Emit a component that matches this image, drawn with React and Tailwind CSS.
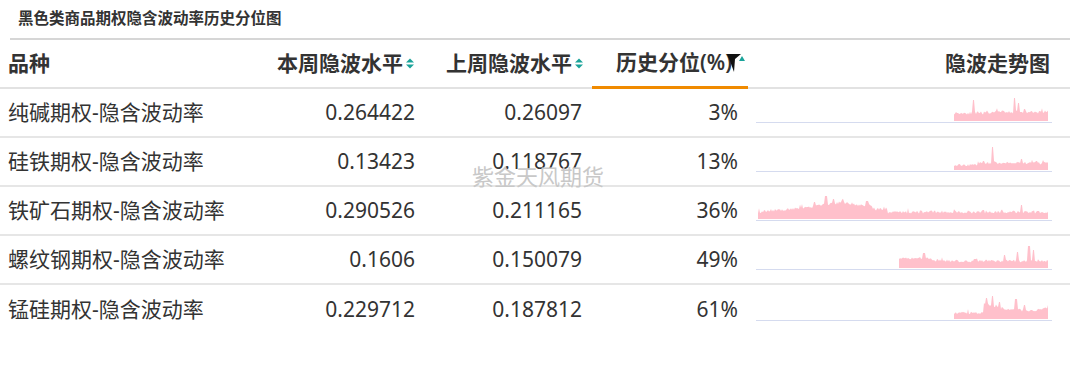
import React from "react";

const FONT = { fontFamily: '"Noto Sans", "Noto Sans CJK SC", sans-serif' };

function rng(seed) {
  let s = seed;
  return () => {
    s = (s * 16807) % 2147483647;
    return (s - 1) / 2147483646;
  };
}

// sparkline configs: start = fraction where data begins, level(t) = base height in px
const SERIES = [
  {
    seed: 11,
    start: 0.68,
    noise: 3,
    level: (t) => 8 + (t > 0.8 ? 1 : 0),
    spikes: [[0.745, 21], [0.885, 23], [0.9, 18], [0.92, 12]],
  },
  {
    seed: 23,
    start: 0.68,
    noise: 2.5,
    level: (t) => (t > 0.76 ? 7 : 5),
    spikes: [[0.81, 23], [0.78, 9], [0.91, 11], [0.96, 9]],
  },
  {
    seed: 37,
    start: 0.01,
    noise: 3,
    level: (t) => {
      if (t < 0.2) return 7 + t * 25;
      if (t < 0.4) return 13 + (t < 0.3 ? (t - 0.2) * 40 : (0.4 - t) * 30);
      if (t < 0.45) return 10;
      return 7;
    },
    spikes: [[0.24, 23], [0.265, 20], [0.43, 9], [0.2, 17], [0.38, 18], [0.91, 14], [0.78, 9]],
  },
  {
    seed: 51,
    start: 0.49,
    noise: 2.5,
    level: (t) => {
      if (t < 0.6) return 10;
      if (t < 0.75) return 8 - (t - 0.6) * 10;
      return 7;
    },
    spikes: [[0.575, 15], [0.75, 9], [0.85, 13], [0.895, 16], [0.935, 22], [0.95, 18]],
  },
  {
    seed: 67,
    start: 0.68,
    noise: 2.5,
    level: (t) => {
      if (t < 0.78) return 6;
      if (t < 0.85) return 16 - (t - 0.78) * 80;
      if (t < 0.96) return 10 - (t - 0.85) * 20;
      return 9 + (t - 0.96) * 60;
    },
    spikes: [[0.79, 21], [0.81, 23], [0.835, 17], [0.89, 20], [0.92, 14]],
  },
];

function buildPath(cfg, w, base) {
  const r = rng(cfg.seed);
  const n = w;
  const startI = Math.floor(cfg.start * n);
  const pts = [];
  for (let i = startI; i <= n; i++) {
    const t = i / n;
    let h = cfg.level(t) + (r() - 0.5) * cfg.noise;
    if (r() > 0.93) h += r() * 3;
    for (const [st, sh] of cfg.spikes) {
      if (Math.abs(t - st) < 0.004) h = Math.max(h, sh);
    }
    pts.push([i, Math.max(2, h)]);
  }
  let d = `M${startI},${base}`;
  for (const [x, h] of pts) d += ` L${x},${(base - h).toFixed(1)}`;
  d += ` L${n},${base} Z`;
  return d;
}

function Sparkline({ cfg }) {
  const w = 292;
  const base = 29;
  return (
    <svg width="296" height="31" viewBox="0 0 296 31" className="block">
      <path d={buildPath(cfg, w, base)} fill="#ffc0cb" />
      <line x1="0" y1="30.5" x2="296" y2="30.5" stroke="#d5dbef" strokeWidth="1" />
    </svg>
  );
}

function SortIcon() {
  return (
    <svg width="10" height="13" viewBox="0 0 10 13" className="ml-[2px] shrink-0">
      <polygon points="5,1.5 9,5.5 1,5.5" fill="#1aa39a" />
      <polygon points="1,7.5 9,7.5 5,11.5" fill="#1aa39a" />
    </svg>
  );
}

function ActiveSortIcon() {
  return (
    <svg width="20" height="20" viewBox="0 0 20 20" className="shrink-0 -ml-[6px]">
      <polygon points="13,8 19,8 16,3" fill="#1aa39a" />
      <polygon points="1,1 15,1 9,6 8,19 4,8" fill="#111" />
    </svg>
  );
}

const rows = [
  ["纯碱期权-隐含波动率", "0.264422", "0.26097", "3%"],
  ["硅铁期权-隐含波动率", "0.13423", "0.118767", "13%"],
  ["铁矿石期权-隐含波动率", "0.290526", "0.211165", "36%"],
  ["螺纹钢期权-隐含波动率", "0.1606", "0.150079", "49%"],
  ["锰硅期权-隐含波动率", "0.229712", "0.187812", "61%"],
];

const GRID = "grid grid-cols-[260px_165px_167px_156px_322px]";

export default function App() {
  return (
    <div className="w-[1080px] h-[365px] bg-white text-[#333] relative overflow-hidden" style={FONT}>
      {/* TITLE */}
      <div className="h-[40px] flex items-center ml-[10px] w-[1060px] border-b-2 border-[#d6d6d6]">
        <span className="text-[15.5px] font-bold text-[#333] ml-[8px]">黑色类商品期权隐含波动率历史分位图</span>
      </div>

      {/* TABLE */}
      <div className="w-[1070px]">
        {/* HEADER */}
        <div className={`${GRID} h-[49px] border-b-2 border-[#e2e2e2] text-[21px] font-bold`}>
          <div className="flex items-center pl-[8px]">品种</div>
          <div className="flex items-center justify-end pr-[10px]">
            本周隐波水平
            <SortIcon />
          </div>
          <div className="flex items-center justify-end pr-[8px]">
            上周隐波水平
            <SortIcon />
          </div>
          <div className="flex items-center justify-end pr-[2px] border-b-[3px] border-[#f08a00] -mb-[2px] font-semibold">
            历史分位(%)
            <ActiveSortIcon />
          </div>
          <div className="flex items-center justify-end pr-[20px]">隐波走势图</div>
        </div>

        {/* ROWS */}
        {rows.map((r, i) => (
          <div
            key={i}
            className={`${GRID} h-[49px] text-[21px] ${i < rows.length - 1 ? "border-b-2 border-[#e6e6e6]" : ""}`}
          >
            <div className="flex items-center pl-[8px] whitespace-nowrap">{r[0]}</div>
            <div className="flex items-center justify-end pr-[10px]">{r[1]}</div>
            <div className="flex items-center justify-end pr-[10px]">{r[2]}</div>
            <div className="flex items-center justify-end pr-[10px]">{r[3]}</div>
            <div className="flex items-end pl-[8px] pb-[13px]">
              <Sparkline cfg={SERIES[i]} />
            </div>
          </div>
        ))}
      </div>

      {/* WATERMARK */}
      <div className="absolute left-[472px] top-[160px] text-[22px] text-[#c8c8c8] pointer-events-none select-none">
        紫金天风期货
      </div>
    </div>
  );
}
